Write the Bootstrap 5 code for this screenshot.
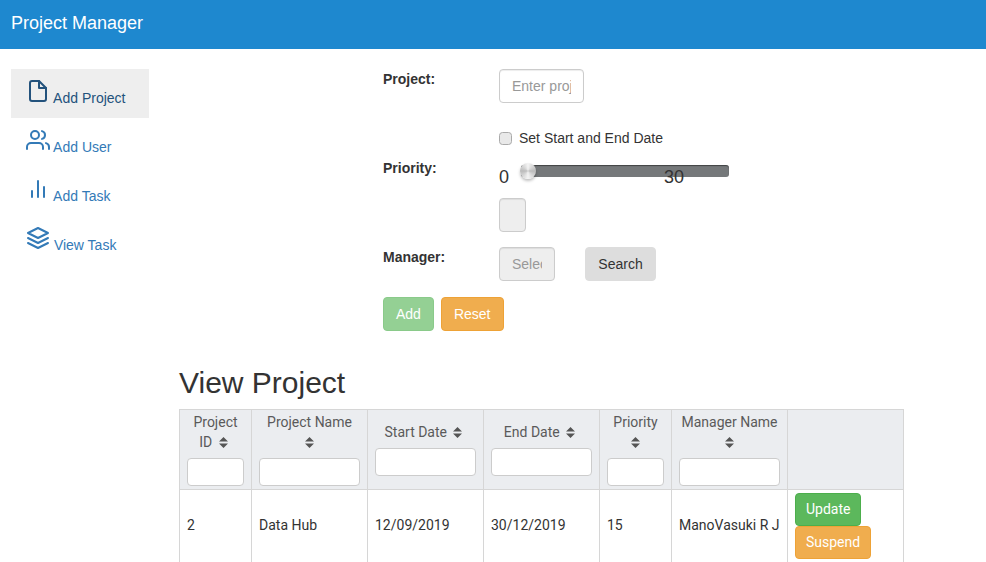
<!DOCTYPE html>
<html lang="en">
<head>
    <meta charset="UTF-8">
    <title>Project Manager</title>
    <link rel="stylesheet" href="https://cdn.jsdelivr.net/npm/bootstrap@5.3.2/dist/css/bootstrap.min.css">
    <style>
        html, body { height: 562px; overflow: hidden; }
        body { font-family: "Liberation Sans", Arial, sans-serif; font-size: 14px; line-height: 20px; color: #333; }
        .topbar { height: 49px; background: #1e88cf; padding: 0 11px 4px; }
        .topbar .navbar-brand { font-size: 18px; color: #fff; padding: 0; margin: 0; line-height: 20px; }
        .side-menu { width: 138px; margin: 20px 0 0 11px; flex-shrink: 0; }
        .side-menu .nav-link { height: 49px; padding: 10px 15px; color: #337ab7; font-size: 14px; line-height: 20px; white-space: nowrap; }
        .side-menu .nav-link.active { background: #eee; color: #23527c; }
        .side-menu svg { width: 24px; height: 24px; vertical-align: baseline; fill: none; stroke: currentColor; stroke-width: 2; stroke-linecap: round; stroke-linejoin: round; }
        .main-area { width: 725px; margin-left: 30px; }
        .form-area { padding: 20px 0 0 204px; }
        .form-name { width: 116px; font-weight: 700; flex-shrink: 0; }
        .priority-row { margin-top: 10px; }
        .manager-row { margin-top: 15px; }
        .add-row { margin-top: 16px; gap: 7px; }
        .pm-input { height: 34px; padding: 6px 12px; font-size: 14px; line-height: 20px; color: #555; border: 1px solid #ccc; border-radius: 4px; box-shadow: inset 0 1px 1px rgba(0,0,0,.075); }
        .pm-input::placeholder { color: #999; }
        .pm-input:disabled { background: #eee; }
        .project-input { width: 85px; }
        .manager-input { width: 56px; }
        .check-row { margin: 25px 0 0 116px; height: 20px; }
        .check-row input { width: 13px; height: 13px; margin: 0 7px 0 0; background-color: #e9e9e9; border: 1px solid #aaa; border-radius: 2px; }
        .check-row label { color: #333; }
        .range-box { position: relative; width: 230px; height: 33px; margin-top: 7px; }
        .range-nums { position: absolute; top: 2px; font-size: 18px; line-height: 20px; }
        .range-track { position: absolute; left: 22px; top: 0; width: 208px; height: 12px; background: #75787a; border-radius: 3px; box-shadow: inset 0 1px 1px rgba(0,0,0,.45); }
        .range-thumb { position: absolute; left: -1px; top: -2px; width: 16px; height: 16px; border-radius: 50%; background: conic-gradient(#f4f4f4, #bbb, #f4f4f4, #bbb, #f4f4f4); box-shadow: 0 2px 3px rgba(0,0,0,.25); }
        .value-box { width: 27px; height: 34px; background: #eee; }
        .btn-pm { height: 34px; padding: 6px 12px; font-size: 14px; line-height: 20px; border-radius: 4px; }
        .btn-search { width: 71px; background: #ddd; border-color: #ddd; color: #333; margin-left: 30px; padding: 6px 0; }
        .btn-add { background: #5cb85c; border-color: #4cae4c; color: #fff; }
        .btn-add:disabled { background: #5cb85c; border-color: #4cae4c; color: #fff; opacity: .65; }
        .btn-reset { background: #f0ad4e; border-color: #eea236; color: #fff; }
        .view-title { font-size: 30px; line-height: 33px; margin: 35px 0 10px; font-weight: 400; color: #333; }
        .project-table { width: 724px; table-layout: fixed; margin: 0; font-family: Roboto, sans-serif; font-size: 14px; line-height: 20px; border-color: #d6d6d6; }
        .project-table th { background: #ebedf0; color: #5a5a5a; font-weight: 400; text-align: center; vertical-align: middle; padding: 2px 7px 4px; }
        .project-table td { padding: 3px 7px 5px; vertical-align: middle; color: #333; }
        .project-table td.action-cell { padding: 3px 7px; }
        .project-table .filter-input { display: block; width: 100%; height: 28px; margin-top: 6px; margin-bottom: -1px; background: #fff; border: 1px solid #ccc; border-radius: 4px; }
        .sort-mark { width: 9px; height: 11px; fill: #555; vertical-align: -1px; margin: 0 4px 0 3px; }
        .project-table .btn-pm { display: block; height: 33px; padding: 4px 10px 6px; color: #fff; width: max-content; }
        .btn-update { background: #5cb85c; border-color: #4cae4c; }
        .btn-suspend { background: #f0ad4e; border-color: #eea236; }
    </style>
</head>
<body>

    <nav class="navbar topbar">
        <a class="navbar-brand" href="#">Project Manager</a>
    </nav>

    <div class="d-flex">
        <ul class="nav flex-column side-menu">
            <li class="nav-item">
                <a class="nav-link active" href="#"><svg viewBox="0 0 24 24"><path d="M13 2H6a2 2 0 0 0-2 2v16a2 2 0 0 0 2 2h12a2 2 0 0 0 2-2V9z"/><polyline points="13 2 13 9 20 9"/></svg> Add Project</a>
            </li>
            <li class="nav-item">
                <a class="nav-link" href="#"><svg viewBox="0 0 24 24"><path d="M17 21v-2a4 4 0 0 0-4-4H5a4 4 0 0 0-4 4v2"/><circle cx="9" cy="7" r="4"/><path d="M23 21v-2a4 4 0 0 0-3-3.87"/><path d="M16 3.13a4 4 0 0 1 0 7.75"/></svg> Add User</a>
            </li>
            <li class="nav-item">
                <a class="nav-link" href="#"><svg viewBox="0 0 24 24"><line x1="18" y1="20" x2="18" y2="10"/><line x1="12" y1="20" x2="12" y2="4"/><line x1="6" y1="20" x2="6" y2="14"/></svg> Add Task</a>
            </li>
            <li class="nav-item">
                <a class="nav-link" href="#"><svg viewBox="0 0 24 24"><polygon points="12 2 2 7 12 12 22 7 12 2"/><polyline points="2 17 12 22 22 17"/><polyline points="2 12 12 17 22 12"/></svg>&nbsp;View Task</a>
            </li>
        </ul>

        <div class="main-area">
            <form class="form-area">
                <div class="d-flex">
                    <div class="form-name">Project:</div>
                    <input type="text" class="form-control pm-input project-input" placeholder="Enter project name">
                </div>

                <div class="d-flex align-items-center check-row">
                    <input class="form-check-input" type="checkbox" id="setDates">
                    <label for="setDates">Set Start and End Date</label>
                </div>

                <div class="d-flex priority-row">
                    <div class="form-name">Priority:</div>
                    <div>
                        <div class="range-box">
                            <span class="range-nums" style="left: 0">0</span>
                            <div class="range-track"><div class="range-thumb"></div></div>
                            <span class="range-nums" style="left: 165px">30</span>
                        </div>
                        <input type="text" class="form-control pm-input value-box" disabled>
                    </div>
                </div>

                <div class="d-flex manager-row">
                    <div class="form-name">Manager:</div>
                    <input type="text" class="form-control pm-input manager-input" placeholder="Select Manager" disabled>
                    <button type="button" class="btn btn-pm btn-search">Search</button>
                </div>

                <div class="d-flex add-row">
                    <button type="button" class="btn btn-pm btn-add" disabled>Add</button>
                    <button type="button" class="btn btn-pm btn-reset">Reset</button>
                </div>
            </form>

            <h2 class="view-title">View Project</h2>

            <table class="table table-bordered project-table">
                <colgroup>
                    <col style="width: 72px"><col style="width: 116px"><col style="width: 116px"><col style="width: 116px"><col style="width: 72px"><col style="width: 116px"><col style="width: 116px">
                </colgroup>
                <thead>
                    <tr>
                        <th>Project ID <svg class="sort-mark" viewBox="0 0 9 11"><path d="M4.5 0 9 4.5H0zM4.5 11 0 6.5h9z"/></svg><input class="filter-input" type="text"></th>
                        <th>Project Name <svg class="sort-mark" viewBox="0 0 9 11"><path d="M4.5 0 9 4.5H0zM4.5 11 0 6.5h9z"/></svg><input class="filter-input" type="text"></th>
                        <th>Start Date <svg class="sort-mark" viewBox="0 0 9 11"><path d="M4.5 0 9 4.5H0zM4.5 11 0 6.5h9z"/></svg><input class="filter-input" type="text"></th>
                        <th>End Date <svg class="sort-mark" viewBox="0 0 9 11"><path d="M4.5 0 9 4.5H0zM4.5 11 0 6.5h9z"/></svg><input class="filter-input" type="text"></th>
                        <th>Priority <svg class="sort-mark" viewBox="0 0 9 11"><path d="M4.5 0 9 4.5H0zM4.5 11 0 6.5h9z"/></svg><input class="filter-input" type="text"></th>
                        <th>Manager Name <svg class="sort-mark" viewBox="0 0 9 11"><path d="M4.5 0 9 4.5H0zM4.5 11 0 6.5h9z"/></svg><input class="filter-input" type="text"></th>
                        <th></th>
                    </tr>
                </thead>
                <tbody>
                    <tr>
                        <td>2</td>
                        <td>Data Hub</td>
                        <td>12/09/2019</td>
                        <td>30/12/2019</td>
                        <td>15</td>
                        <td>ManoVasuki R J</td>
                        <td class="action-cell">
                            <button type="button" class="btn btn-pm btn-update">Update</button>
                            <button type="button" class="btn btn-pm btn-suspend">Suspend</button>
                        </td>
                    </tr>
                </tbody>
            </table>
        </div>
    </div>

</body>
</html>
